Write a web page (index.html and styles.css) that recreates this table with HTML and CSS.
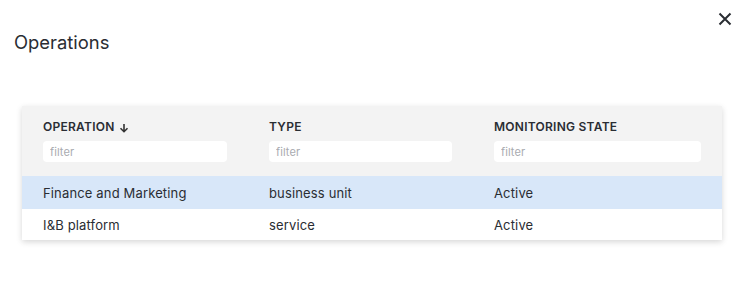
FILE: index.html
```html
<!DOCTYPE html>
<html>
<head>
<meta charset="utf-8">
<link rel="stylesheet" href="styles.css">
</head>
<body>
<div class="dialog">
  <div class="dialog-head">
    <h1 class="title">Operations</h1>
    <button class="close" aria-label="Close">
      <svg width="14" height="14" viewBox="0 0 14 14"><path d="M1.5 1.5 L12.5 12.5 M12.5 1.5 L1.5 12.5" stroke="#2a2d33" stroke-width="2" fill="none"/></svg>
    </button>
  </div>
  <div class="card">
    <table class="grid">
      <colgroup><col class="c1"><col class="c2"><col class="c3"></colgroup>
      <thead>
        <tr>
          <th><div class="label">OPERATION <svg class="sort" width="10" height="10" viewBox="0 0 10 10"><path d="M5 1 V8.5 M1.5 5.2 L5 8.7 L8.5 5.2" stroke="#333" stroke-width="1.6" fill="none"/></svg></div><input class="filter" placeholder="filter"></th>
          <th><div class="label">TYPE</div><input class="filter" placeholder="filter"></th>
          <th><div class="label">MONITORING STATE</div><input class="filter" placeholder="filter"></th>
        </tr>
      </thead>
      <tbody>
        <tr class="selected"><td>Finance and Marketing</td><td>business unit</td><td>Active</td></tr>
        <tr><td>I&amp;B platform</td><td>service</td><td>Active</td></tr>
      </tbody>
    </table>
  </div>
</div>
</body>
</html>
```
FILE: styles.css
```css
html, body { margin: 0; padding: 0; background: #fff; }
body { font-family: Inter, "Noto Sans", sans-serif; color: #2a2d33; width: 744px; height: 301px; overflow: hidden; }
.dialog-head { display: flex; justify-content: space-between; align-items: flex-start; padding: 0 12px 0 14px; }
.title { margin: 30px 0 0 0; font-size: 18.4px; font-weight: 400; line-height: 24px; color: #2a2d33; }
.close { margin-top: 12px; border: 0; background: none; padding: 0; width: 14px; height: 14px; display: block; }
.close svg { display: block; }
.card { margin: 52px 0 0 22px; width: 700px; box-shadow: 0 2px 6px rgba(0,0,0,0.16); background: #fff; }
.grid { width: 700px; border-collapse: collapse; table-layout: fixed; }
.c1 { width: 226px; } .c2 { width: 225px; } .c3 { width: 249px; }
thead tr { background: #f3f3f3; }
th { text-align: left; padding: 11px 21px 14px 21px; vertical-align: top; font-weight: 600; }
.label { font-size: 12px; line-height: 20px; color: #2a2d33; display: flex; align-items: center; gap: 4px; letter-spacing: 0.25px; font-weight: 600; }
.sort { margin-top: 2px; }
.filter { display: block; margin-top: 4px; width: 100%; box-sizing: border-box; height: 21px; border: 0; border-radius: 4px; background: #fff; padding: 0 7px; font-family: inherit; font-size: 11px; color: #333; outline: none; letter-spacing: 0.1px; }
.filter::placeholder { color: #a9abb0; }
td { padding: 0 21px; height: 31px; font-size: 13px; color: #2a2d33; letter-spacing: 0.15px; }
tr.selected td { background: #d8e7f9; height: 33px; }
```
